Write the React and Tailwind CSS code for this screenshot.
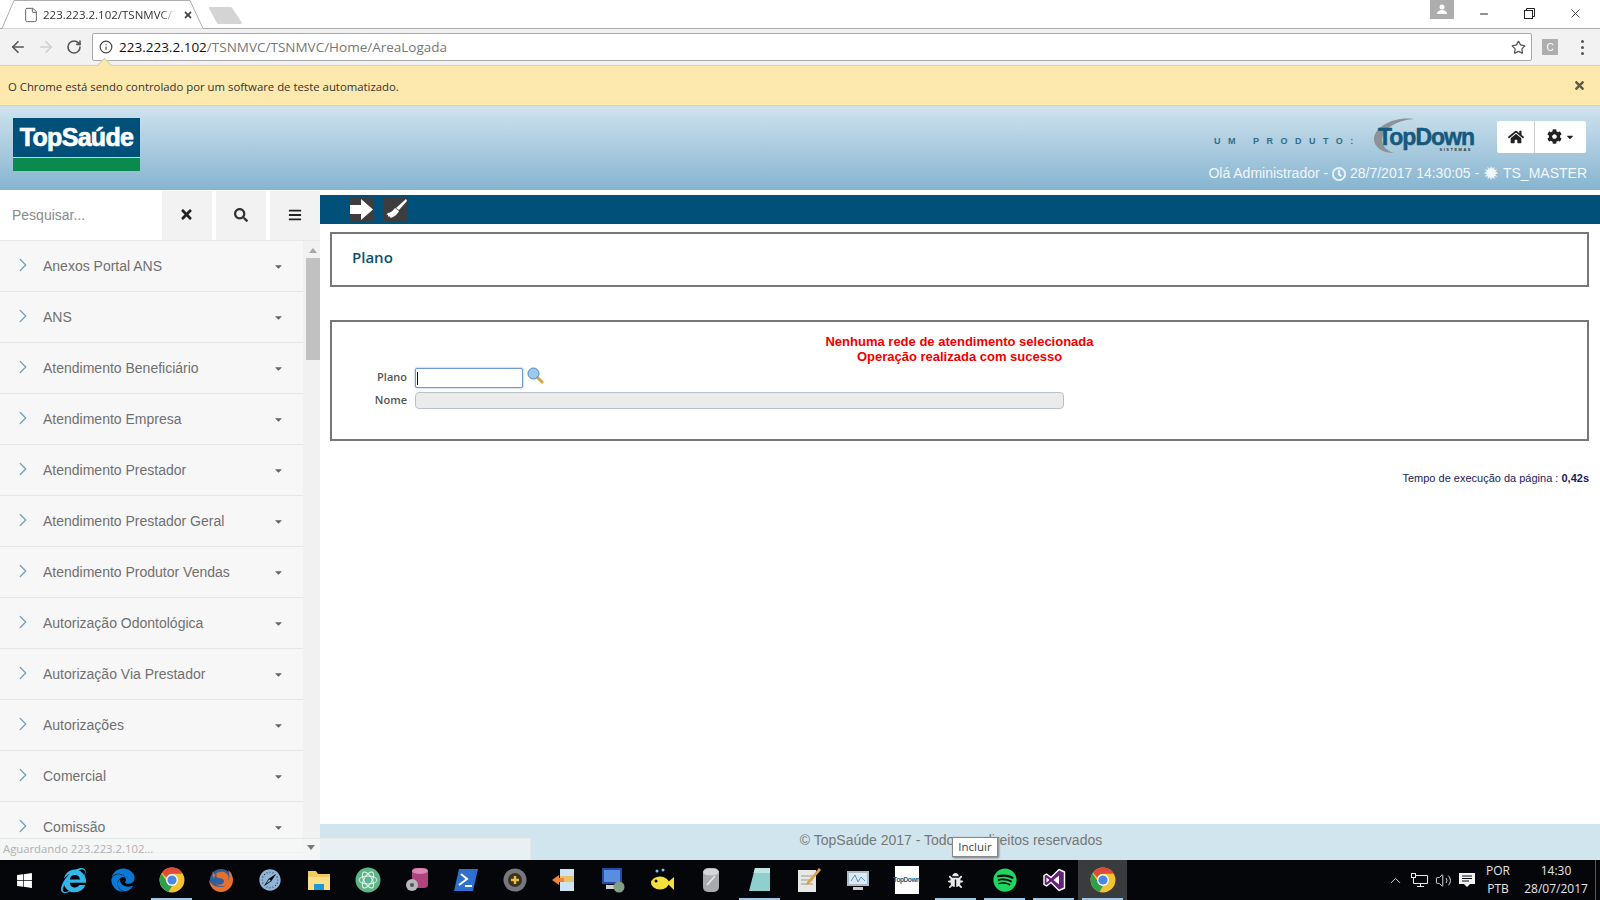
import {
  FaHome, FaCog, FaTimes, FaSearch, FaBars, FaRegClock, FaCaretDown, FaWindows, FaEdge,
  FaInternetExplorer, FaSafari, FaSpotify, FaBug,
} from 'react-icons/fa';
import { ArrowLeft, ArrowRight, RotateCw, Info, Star, ChevronRight, ChevronUp, Volume2, Minus, X, File } from 'lucide-react';

const menu = [
  'Anexos Portal ANS', 'ANS', 'Atendimento Beneficiário', 'Atendimento Empresa', 'Atendimento Prestador',
  'Atendimento Prestador Geral', 'Atendimento Produtor Vendas', 'Autorização Odontológica',
  'Autorização Via Prestador', 'Autorizações', 'Comercial', 'Comissão',
];

function ChromeLogo({ size = 26 }) {
  return (
    <svg width={size} height={size} viewBox="0 0 48 48">
      <circle cx="24" cy="24" r="23" fill="#f4c430" />
      <path d="M24 1a23 23 0 0 1 20 11.5H24a11.5 11.5 0 0 0-10.5 7L5.4 10.500A23 23 0 0 1 24 1z" fill="#dd4b39" />
      <path d="M4.500 12a23 23 0 0 0 13 34l8-13.500a11.500 11.500 0 0 1-12-7z" fill="#2f9e4f" />
      <circle cx="24" cy="24" r="11" fill="#fff" />
      <circle cx="24" cy="24" r="8.500" fill="#4a86e8" />
    </svg>
  );
}

// small hand drawn taskbar icons
const taskIcons = [
  <FaWindows key="w" className="text-white text-[17px]" />,
  <FaInternetExplorer key="ie" className="text-[#35b6e8] text-[25px]" />,
  <FaEdge key="edge" className="text-[#0a78d4] text-[24px]" />,
  <ChromeLogo key="c1" />,
  <svg key="ff" width="26" height="26" viewBox="0 0 26 26"><circle cx="13" cy="13" r="11" fill="#2f5f9e" /><path d="M5 3c0 3 1 4 2 5 2-3 6-4 9-3 5 2 6 8 3 12-3 3-8 3-11 0 4 2 8 0 8-3 0-2-3-3-5-3-3 0-3-3-2-4-2 1-3 3-3 5-1-2-2-6-1-9z M1 12c0 7 5 13 12 13s12-6 12-12c0-4-2-8-5-10 3 6 1 17-7 17S2 16 1 12z" fill="#e8702a" /></svg>,
  <FaSafari key="sf" className="text-[#8fb4d8] text-[22px]" />,
  <svg key="folder" width="24" height="22" viewBox="0 0 24 22"><path d="M1 2h8l2 3h12v16H1z" fill="#f4c95d" /><rect x="1" y="8" width="22" height="13" fill="#fbe08a" /><rect x="7" y="15" width="10" height="6" fill="#1c9ad6" /></svg>,
  <svg key="atom" width="26" height="26" viewBox="0 0 26 26"><circle cx="13" cy="13" r="12.500" fill="#5fb58a" /><g fill="none" stroke="#e6f5ec" strokeWidth="1"><ellipse cx="13" cy="13" rx="9" ry="4" transform="rotate(60 13 13)" /><ellipse cx="13" cy="13" rx="9" ry="4" transform="rotate(-60 13 13)" /><ellipse cx="13" cy="13" rx="9" ry="4" /></g></svg>,
  <svg key="db" width="24" height="26" viewBox="0 0 24 26"><rect x="7" y="1" width="16" height="20" rx="4" fill="#b0447f" /><ellipse cx="15" cy="4" rx="8" ry="3" fill="#d987b5" /><circle cx="7" cy="18" r="6" fill="#b8b8b8" /><circle cx="7" cy="18" r="2" fill="#555" /></svg>,
  <svg key="ps" width="24" height="22" viewBox="0 0 24 22"><path d="M5 0h19l-5 22H0z" fill="#2f6fd0" /><path d="M7 5l6 5-8 6M11 17h7" fill="none" stroke="#fff" strokeWidth="2" /></svg>,
  <svg key="disc" width="24" height="24" viewBox="0 0 24 24"><circle cx="12" cy="12" r="11.500" fill="#77777f" /><circle cx="12" cy="12" r="7" fill="#3b3320" /><path d="M12 8v8M8 12h8" stroke="#e5bf3e" strokeWidth="2.500" /></svg>,
  <svg key="arrow" width="24" height="24" viewBox="0 0 24 24"><rect x="8" y="1" width="14" height="22" fill="#cfe3f2" /><rect x="8" y="8" width="14" height="6" fill="#e8c16a" /><path d="M0 12l7-5v3h5v4H7v3z" fill="#f2833a" /></svg>,
  <svg key="pc" width="24" height="26" viewBox="0 0 24 26"><rect x="1" y="1" width="20" height="16" fill="#234ba8" /><rect x="3" y="3" width="16" height="12" fill="#5a8de0" /><rect x="5" y="18" width="14" height="4" fill="#cfcfcf" /><circle cx="18" cy="20" r="5.500" fill="#7fa084" /></svg>,
  <svg key="fish" width="26" height="24" viewBox="0 0 26 24"><ellipse cx="11" cy="15" rx="9" ry="6.500" fill="#f6e03a" /><path d="M18 15l7-6v13z" fill="#f6e03a" /><circle cx="7" cy="13" r="1.500" fill="#111" /><circle cx="8" cy="3" r="1.500" fill="#7cc0ea" /><circle cx="14" cy="2" r="1.500" fill="#7cc0ea" /></svg>,
  <svg key="disk" width="18" height="26" viewBox="0 0 18 26"><rect x="1" y="1" width="16" height="24" rx="5" fill="#a8aaae" /><ellipse cx="9" cy="5" rx="8" ry="3.500" fill="#d5d6d8" /><path d="M5 18l8-9" stroke="#ececec" strokeWidth="1.500" /></svg>,
  <svg key="note" width="22" height="26" viewBox="0 0 22 26"><path d="M6 1h15v23H0z" fill="#8fd0cf" /><path d="M6 1h15v5H4.500z" fill="#bfe6e4" /></svg>,
  <svg key="pad" width="24" height="26" viewBox="0 0 24 26"><rect x="1" y="3" width="18" height="22" fill="#e8e8e4" /><path d="M4 9h12M4 13h12M4 17h12" stroke="#999" /><path d="M22 1l2 2-12 14-3 1 1-3z" fill="#d9a441" /></svg>,
  <svg key="mon" width="24" height="24" viewBox="0 0 24 24"><rect x="1" y="3" width="22" height="15" fill="#a9bcc9" /><rect x="3" y="5" width="18" height="11" fill="#dfe9ef" /><path d="M5 13l4-6 3 7 3-5 4 4" fill="none" stroke="#4f94c9" /><rect x="7" y="19" width="10" height="3" fill="#c9c9c9" /></svg>,
  <div key="td" className="w-[24px] h-[28px] bg-white flex items-center justify-center text-[#17607f] text-[6.5px] font-bold [font-family:'Liberation_Sans',sans-serif] tracking-[-0.4px]">TopDown</div>,
  <FaBug key="bug" className="text-[#e8e8e8] text-[15px]" />,
  <FaSpotify key="sp" className="text-[#1ed760] text-[24px]" />,
  <svg key="vs" width="24" height="24" viewBox="0 0 24 24"><path d="M17 1.500l5.500 2.500v16L17 22.500l-8-8-4.500 3.500L2 16.500v-9L4.500 6 9 9.500z" fill="#68217a" stroke="#fff" strokeWidth="1.400" strokeLinejoin="round" /><path d="M17 7.500v9L11.500 12zM4.500 9.500L7.500 12l-3 2.500z" fill="#fff" /></svg>,
  <ChromeLogo key="c2" />,
];

const running = [3, 15, 19, 20, 21, 22];

export default function App() {
  return (
    <div className="w-[1600px] h-[900px] overflow-hidden flex flex-col bg-white relative [font-family:'Liberation_Sans',Arial,sans-serif]">
      {/* tabs */}
      <div className="h-[29px] shrink-0 flex items-start relative border-b border-[#aeaeae] pr-[2px] [font-family:'Open_Sans',sans-serif]">
        <div className="w-[206px] h-[29px] shrink-0 relative flex items-center pl-[23px]">
          <svg className="absolute left-0 top-0" width="206" height="29" viewBox="0 0 206 29">
            <path d="M0 28.500h2L14 .5h176l13 28h3" fill="#fff" stroke="#aeaeae" />
          </svg>
          <File size={16} strokeWidth={1.5} className="relative text-[#666]" />
          <span className="relative ml-[4px] w-[133px] whitespace-nowrap text-[11.500px] text-[#333] [mask-image:linear-gradient(90deg,#000_88%,transparent)]">223.223.2.102/TSNMVC/T</span>
          <FaTimes size={10} className="relative ml-[7px] text-[#444]" />
        </div>
        <svg className="mt-[7px] ml-[3px]" width="34" height="17" viewBox="0 0 34 17"><path d="M1 1h21l10 15H9z" fill="#d4d4d4" stroke="#d4d4d4" strokeWidth="2" strokeLinejoin="round" /></svg>
        <div className="flex-1" />
        <div className="w-[24px] h-[19px] bg-[#adadad] flex items-center justify-center mr-[6px]">
          <svg width="12" height="11" viewBox="0 0 12 11"><circle cx="6" cy="3" r="2.500" fill="#fff" /><path d="M1 10c0-3 3-4 5-4s5 1 5 4z" fill="#fff" /></svg>
        </div>
        <div className="w-[46px] h-[27px] flex items-center justify-center"><Minus size={12} className="text-[#222] ml-[2px]" /></div>
        <div className="w-[46px] h-[27px] flex items-center justify-center">
          <svg width="11" height="11" viewBox="0 0 11 11" fill="none" stroke="#222"><rect x=".5" y="2.500" width="8" height="8" /><path d="M2.500 2.500v-2h8v8h-2" /></svg>
        </div>
        <div className="w-[46px] h-[27px] flex items-center justify-center"><X size={15} strokeWidth={1.3} className="text-[#222]" /></div>
      </div>

      {/* toolbar */}
      <div className="h-[36px] shrink-0 bg-[#f2f2f2] flex items-center pl-[9px] pr-[11px]">
        <ArrowLeft size={18} strokeWidth={2.2} className="text-[#555]" />
        <ArrowRight size={18} strokeWidth={2.2} className="text-[#d0d0d0] ml-[10px]" />
        <RotateCw size={16} strokeWidth={2.4} className="text-[#555] ml-[11px]" />
        <div className="ml-[10px] w-[1440px] h-[28px] bg-white border border-[#aaaaaa] rounded-[2px] flex items-center pl-[6px] pr-[5px] [font-family:'Open_Sans',sans-serif] text-[13.500px]">
          <Info size={14} strokeWidth={2} className="text-[#444]" />
          <span className="ml-[6px] text-[#111]">223.223.2.102</span>
          <span className="text-[#777]">/TSNMVC/TSNMVC/Home/AreaLogada</span>
          <Star size={15} strokeWidth={2} className="ml-auto text-[#555]" />
        </div>
        <div className="ml-[10px] w-[16px] h-[16px] bg-[#aeaeae] text-white text-[10px] flex items-center justify-center">C</div>
        <div className="ml-[23px] flex flex-col gap-[3px]">
          <span className="w-[3px] h-[3px] rounded-full bg-[#555]" />
          <span className="w-[3px] h-[3px] rounded-full bg-[#555]" />
          <span className="w-[3px] h-[3px] rounded-full bg-[#555]" />
        </div>
      </div>

      {/* infobar */}
      <div className="h-[41px] shrink-0 bg-[#fde8ae] border-t border-b border-[#d8d0b4] flex items-center justify-between pl-[8px] pr-[14px] relative [font-family:'Open_Sans',sans-serif]">
        <span className="text-[11.350px] text-[#333] pt-[2px]">O Chrome está sendo controlado por um software de teste automatizado.</span>
        <FaTimes size={13} className="text-[#5f5a45]" />
        <span className="absolute left-[99px] top-[-6px] w-[11px] h-[11px] rotate-45 bg-[#fde8ae] border-l border-t border-[#d8d0b4]" />
      </div>

      {/* header */}
      <div className="h-[84px] shrink-0 bg-gradient-to-b from-[#cfe3ee] to-[#86b4d0] flex justify-between">
        <div className="ml-[13px] mt-[12px] w-[127px] h-[53px] bg-[#00507a] relative overflow-hidden">
          <div className="text-white font-bold text-[25px] tracking-[-0.700px] text-center leading-[38px] [-webkit-text-stroke:0.7px_white]">TopSaúde</div>
          <div className="absolute left-0 right-0 bottom-0 h-[14px] bg-[#0a8a4c] border-t border-[#bcd8c8]" />
        </div>
        <div className="flex flex-col items-end pr-[14px]">
          <div className="flex items-center mt-[14px] h-[33px]">
            <span className="text-[9px] tracking-[7.500px] text-[#2f6f8a] w-[160px] whitespace-nowrap pt-[10px] font-bold -ml-[2px]">UM PRODUTO:</span>
            <div className="relative w-[104px] h-[36px] mr-[21px] -ml-[2px] flex items-center justify-center">
              <svg className="absolute left-0 top-[-2px]" width="60" height="38" viewBox="0 0 60 38"><path d="M42 2C22-1 2 10 2 22c0 8 8 14 20 14C10 32 8 24 12 16 18 7 30 3 42 2z" fill="#8d9296" /></svg>
              <span className="relative font-bold text-[23px] tracking-[-1px] text-[#15597d] leading-[26px] pl-[4px] [-webkit-text-stroke:0.5px_#15597d]">TopDown</span>
              <span className="absolute right-[4px] bottom-[2px] text-[4px] tracking-[1.5px] text-[#333] font-bold">SISTEMAS</span>
            </div>
            <div className="flex h-[32px] bg-white rounded-[2px] text-[#222]">
              <div className="w-[38px] flex items-center justify-center border-r border-[#ccc]"><FaHome size={16} /></div>
              <div className="w-[51px] flex items-center justify-center gap-[3px]"><FaCog size={15} /><FaCaretDown size={10} /></div>
            </div>
          </div>
          <div className="mt-[10px] -mr-[1px] flex items-center text-[14px] text-[#f1f7fa] whitespace-nowrap">
            Olá Administrador -&nbsp;<FaRegClock size={14} className="[stroke-width:20px]" />&nbsp;28/7/2017 14:30:05 -&nbsp;<span className="text-[19px] leading-[15px]">✹</span>&nbsp;TS_MASTER
          </div>
        </div>
      </div>

      {/* body */}
      <div className="flex-1 min-h-0 flex">
        <aside className="w-[320px] shrink-0 flex flex-col overflow-hidden">
          <div className="h-[51px] shrink-0 flex pt-[1px] border-b border-[#e8e8e8]">
            <div className="w-[162px] flex items-center pl-[12px] text-[14px] text-[#8a8a8a]">Pesquisar...</div>
            <div className="w-[50px] pb-[2px] pr-[1px] bg-[#f2f2f2] flex items-center justify-center"><FaTimes size={15} className="text-[#222]" /></div>
            <div className="w-[50px] ml-[4px] pb-[2px] bg-[#f2f2f2] flex items-center justify-center"><FaSearch size={14} className="text-[#333]" /></div>
            <div className="w-[50px] ml-[4px] pb-[2px] bg-[#f2f2f2] flex items-center justify-center"><FaBars size={14} className="text-[#222]" /></div>
          </div>
          <div className="flex-1 min-h-0 flex bg-[#f1f1f1]">
            <div className="w-[303px] shrink-0 overflow-hidden bg-[#f7f7f7]">
              {menu.map((m) => (
                <div key={m} className="h-[51px] flex items-center border-b border-[#e6e6e6] pl-[12px] pr-[19px] text-[14px] text-[#707070]">
                  <ChevronRight size={22} strokeWidth={1.4} className="text-[#6fa3c2] -mt-[3px]" />
                  <span className="ml-[9px] flex-1">{m}</span>
                  <FaCaretDown size={11} className="text-[#666]" />
                </div>
              ))}
            </div>
            <div className="flex-1 flex flex-col items-center pl-[1px]">
              <span className="mt-[7px] w-0 h-0 border-x-[4px] border-x-transparent border-b-[5px] border-b-[#a8a8a8]" />
              <div className="mt-[5px] ml-[2px] w-[15px] h-[102px] bg-[#c1c1c1]" />
            </div>
          </div>
        </aside>

        <main className="flex-1 min-w-0 flex flex-col">
          <div className="h-[29px] shrink-0 mt-[5px] bg-[#00507a] flex items-center pl-[30px] gap-[11px]">
            <div className="w-[23px] h-[23px] bg-[#3d3d3d] flex items-center justify-center">
              <svg width="23" height="21" viewBox="0 0 23 21"><path d="M0 6h11V0l12 10.500L11 21v-6H0z" fill="#fff" /></svg>
            </div>
            <div className="w-[24px] h-[23px] bg-[#3d3d3d] flex items-center justify-center">
              <svg width="22" height="21" viewBox="0 0 22 21"><path d="M21 0l1 2-8 9-3-2z" fill="#fff" /><path d="M10 9l4 3c-2 4-6 7-10 7 2 0 1-1 0-2l-1 1 0-2-2 0 2-1-1-1c3 0 6-2 8-5z" fill="#fff" /></svg>
            </div>
          </div>
          <div className="mt-[8px] ml-[10px] mr-[11px] h-[55px] shrink-0 border-2 border-[#777] flex items-center pl-[20px] pb-[5px] [font-family:'Open_Sans',sans-serif] font-semibold text-[15px] text-[#0b4f73]">Plano</div>
          <div className="mt-[33px] ml-[10px] mr-[11px] h-[121px] shrink-0 border-2 border-[#777] pt-[12px]">
            <div className="text-center font-bold text-[13px] leading-[15px] text-[#f00000]">
              <div>Nenhuma rede de atendimento selecionada</div>
              <div>Operação realizada com sucesso</div>
            </div>
            <div className="mt-[4px] flex items-center h-[20px] [font-family:'Open_Sans',sans-serif]">
              <span className="w-[75px] text-right text-[11px] font-semibold text-[#555] pb-[1px]">Plano</span>
              <div className="ml-[8px] w-[108px] h-[20px] rounded-[2px] border border-[#6f9ad6] shadow-[0_0_2px_#6f9ad6] bg-white flex items-center pl-[1px]">
                <span className="w-[1px] h-[13px] bg-[#111]" />
              </div>
              <svg className="ml-[4px] -mt-[5px]" width="17" height="17" viewBox="0 0 17 17"><path d="M10 10l5 5" stroke="#d8a63a" strokeWidth="3" strokeLinecap="round" /><circle cx="6.500" cy="6.500" r="5.500" fill="#9cc9ec" stroke="#4c86bd" /></svg>
            </div>
            <div className="mt-[4px] flex items-center h-[17px] [font-family:'Open_Sans',sans-serif]">
              <span className="w-[75px] text-right text-[11px] font-semibold text-[#555]">Nome</span>
              <div className="ml-[8px] w-[649px] h-[17px] rounded-[4px] border border-[#b9c0c8] bg-[#ebebeb]" />
            </div>
          </div>
          <div className="mt-[29px] pr-[11px] text-right text-[11px] text-[#1a1a5e]">
            Tempo de execução da página : <b>0,42s</b>
          </div>
          <div className="mt-auto h-[36px] shrink-0 bg-[#d0e5ee] flex items-center justify-center pr-[18px] pb-[3px] text-[14px] text-[#777]">
            © TopSaúde 2017 - Todos os direitos reservados
          </div>
        </main>
      </div>

      {/* taskbar */}
      <div className="h-[40px] shrink-0 bg-[#05060a] flex items-stretch text-[#e4e4e4] [font-family:'Open_Sans',sans-serif]">
        {taskIcons.map((icon, i) => (
          <div key={i} className={`w-[49px] flex items-center justify-center relative ${i === 22 ? 'bg-[#3a3b3d]' : ''}`}>
            {icon}
            {running.includes(i) && <span className="absolute bottom-0 left-[4px] right-[4px] h-[2px] bg-[#9cc9e8]" />}
          </div>
        ))}
        <div className="flex-1" />
        <div className="flex items-center gap-[7px] text-[#e8e8e8]">
          <ChevronUp size={17} strokeWidth={1.3} />
          <svg width="17" height="14" viewBox="0 0 17 14" fill="none" stroke="#e8e8e8"><rect x=".5" y=".5" width="4" height="4" /><path d="M4.500 2.500h12v8h-14v-6M9.500 10.500v3M6 13.500h7" /></svg>
          <Volume2 size={17} strokeWidth={1.3} />
          <svg width="16" height="16" viewBox="0 0 16 16"><path d="M0 1h16v11h-5l-3 3-3-3H0z" fill="#f2f2f2" /><path d="M3 4h10M3 6.500h10M3 9h7" stroke="#05060a" /></svg>
        </div>
        <div className="ml-[8px] w-[30px] flex flex-col justify-center text-center text-[12px] leading-[18px]"><span>POR</span><span>PTB</span></div>
        <div className="ml-[13px] w-[60px] flex flex-col justify-center text-center text-[12px] leading-[18px] whitespace-nowrap items-center"><span>14:30</span><span>28/07/2017</span></div>
        <div className="w-[5px] ml-[9px] border-l border-[#555]" />
      </div>

      {/* status bubble + tooltip lie over the page */}
      <div className="absolute left-0 top-[838px] w-[531px] h-[22px] bg-[#f3f5f5]/70 border-t border-r border-[#e3e8ea] text-[11.300px] text-[#b0b0b0] pl-[3px] leading-[20px] [font-family:'Open_Sans',sans-serif]">Aguardando 223.223.2.102...</div>
      <span className="absolute left-[307px] top-[845px] w-0 h-0 border-x-[4px] border-x-transparent border-t-[5px] border-t-[#777]" />
      <div className="absolute left-[952px] top-[837px] w-[46px] h-[20px] bg-white border border-[#888] shadow-[1px_1px_2px_#777] text-[11.500px] text-[#444] text-center leading-[18px] [font-family:'Open_Sans',sans-serif]">Incluir</div>
    </div>
  );
}
